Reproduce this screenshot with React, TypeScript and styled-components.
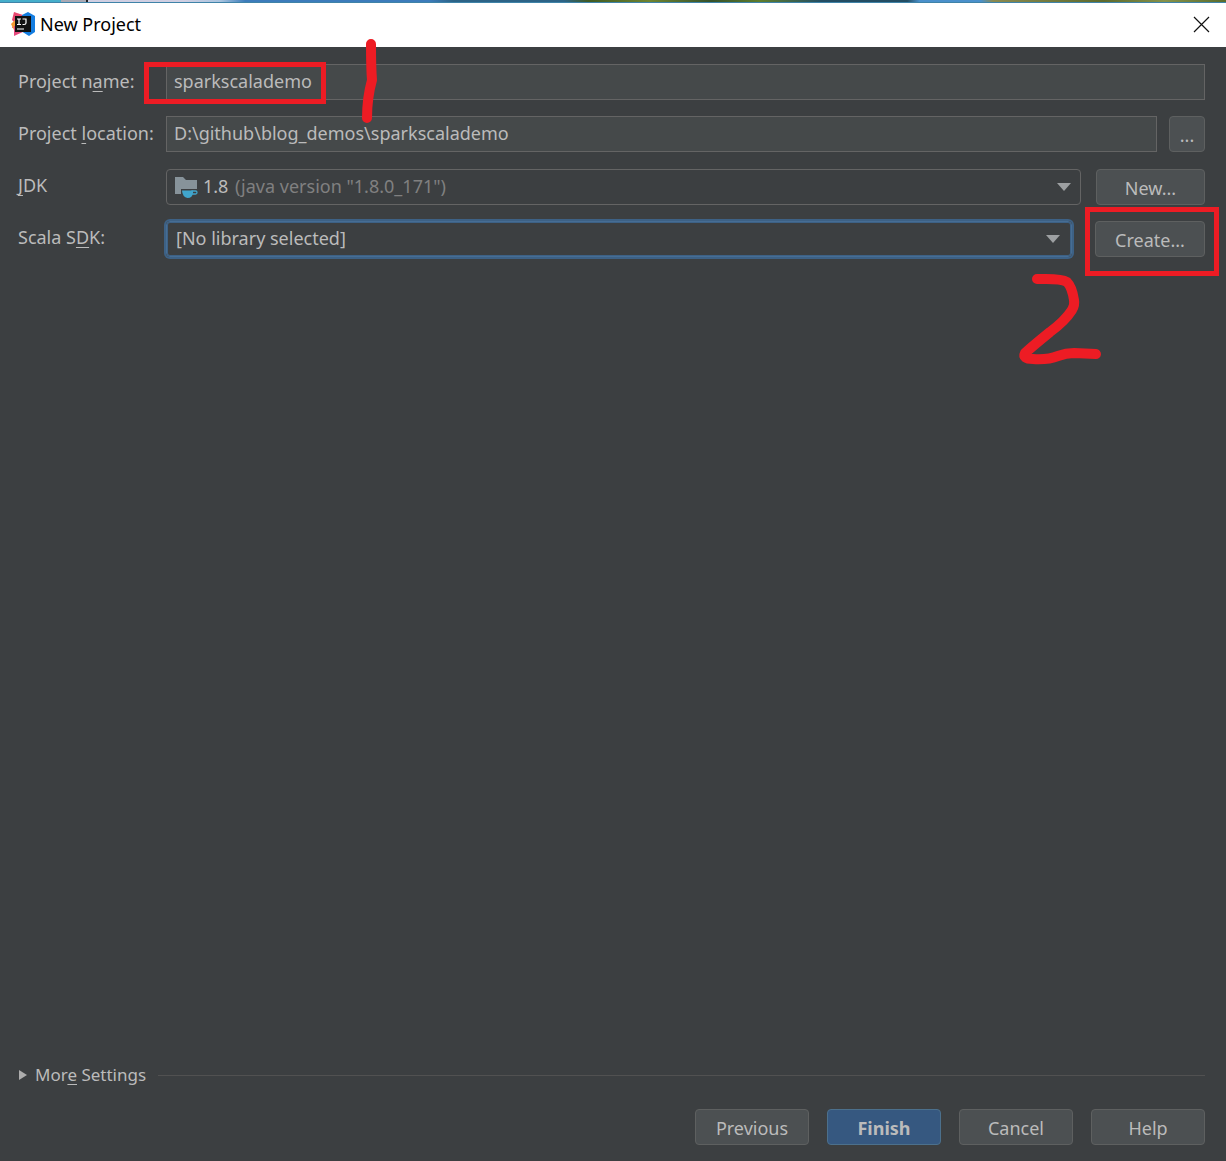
import React from "react";
import styled, { createGlobalStyle, css } from "styled-components";

const red = "#ed1c24";

const GlobalStyle = createGlobalStyle`
  * { box-sizing: border-box; }
  body {
    margin: 0;
    background: #3c3f41;
    color: #bbbbbb;
    font-family: "Noto Sans", "Noto Sans CJK SC", sans-serif;
    font-size: 18px;
    line-height: 24px;
  }
  button, input, select { font: inherit; color: inherit; margin: 0; }
`;

const Window = styled.div`
  display: flex;
  flex-direction: column;
  min-height: 100vh;
`;

const DesktopEdge = styled.div`
  height: 3px;
  border-bottom: 1px solid #3f83a8;
  background: linear-gradient(
    90deg,
    #45aecb 0 5%, #a9a9b4 5% 7%, #222 7% 7.2%, #d0cfe2 7.2% 15%, #a9c4df 18%, #3c7cbb 20% 35%,
    #2c6386 37% 46%, #3f5a22 48%, #6f8430 53%, #35512a 58%, #5f7d2c 62%, #234d63 67% 74%,
    #4a90cb 75% 80%, #8a8a50 81%, #5d6a2c 90%, #86924a 95%, #596b2c 100%
  );
`;

const TitleBar = styled.header`
  display: flex;
  align-items: center;
  gap: 5px;
  height: 44px;
  padding: 0 16px 2px 11px;
  background: #ffffff;
  color: #000000;
`;

const Title = styled.h1`
  flex: 1;
  margin: 0;
  font-size: 18px;
  font-weight: 400;
`;

const CloseButton = styled.button`
  display: flex;
  padding: 0;
  border: 0;
  background: none;
`;

const Form = styled.form`
  flex: 1;
  display: flex;
  flex-direction: column;
  padding: 17px 21px 16px 18px;
`;

const Fields = styled.div`
  display: flex;
  flex-direction: column;
  gap: 17px;
  flex: 1;
`;

const Group = styled.div`
  display: flex;
  flex-direction: column;
  gap: 16px;
`;

const Row = styled.div`
  display: flex;
  align-items: center;
  height: 36px;
`;

const Label = styled.label<{ $raised?: boolean }>`
  flex: none;
  width: 148px;
  padding-bottom: ${(p) => (p.$raised ? 4 : 2)}px;
  white-space: nowrap;
  u { text-underline-offset: 3px; }
`;

const Field = styled.div`
  position: relative;
  display: flex;
  flex: 1;
  min-width: 0;
`;

const TextInput = styled.input`
  flex: 1;
  min-width: 0;
  height: 36px;
  padding: 0 7px 2px;
  border: 1px solid #646464;
  background: #45494a;
  outline: none;
`;

const Combo = styled.div<{ $focused?: boolean }>`
  flex: 1;
  min-width: 0;
  display: flex;
  align-items: center;
  height: 36px;
  padding: 0 9px 0 8px;
  border: 1px solid #646464;
  border-radius: 4px;
  ${(p) =>
    p.$focused &&
    css`
      padding: 0 11px 0 9px;
      border-color: #466d94;
      box-shadow: 0 0 0 2px #3d6185, inset 0 0 0 1px #3d6185;
    `}
`;

const Select = styled.select<{ $grow?: boolean }>`
  appearance: none;
  flex: ${(p) => (p.$grow ? "1" : "none")};
  padding: 0 0 2px;
  border: 0;
  background: transparent;
  outline: none;
`;

const Detail = styled.span`
  flex: 1;
  margin-left: 6px;
  padding-bottom: 2px;
  color: #808080;
  white-space: nowrap;
`;

const Button = styled.button<{ $primary?: boolean; $width: number; $gap?: number }>`
  flex: none;
  width: ${(p) => p.$width}px;
  height: 36px;
  margin-left: ${(p) => p.$gap ?? 0}px;
  padding: 1px 0 0;
  border: 1px solid ${(p) => (p.$primary ? "#4c708c" : "#5e6060")};
  border-radius: 4px;
  background: ${(p) => (p.$primary ? "#365880" : "#4c5052")};
  font-weight: ${(p) => (p.$primary ? 700 : 400)};
`;

const Marked = styled.div`
  position: relative;
  display: flex;
`;

const RedBox = styled.span<{ $inset: string; $width?: number }>`
  position: absolute;
  z-index: 1;
  inset: ${(p) => p.$inset};
  width: ${(p) => (p.$width ? `${p.$width}px` : "auto")};
  border: 5px solid ${red};
  pointer-events: none;
`;

const Stroke = styled.svg<{ $left: number; $top: number }>`
  position: absolute;
  z-index: 1;
  left: ${(p) => p.$left}px;
  top: ${(p) => p.$top}px;
  fill: none;
  stroke: ${red};
  stroke-width: 10;
  stroke-linecap: round;
  stroke-linejoin: round;
  pointer-events: none;
`;

const MoreSettings = styled.div`
  display: flex;
  align-items: center;
  gap: 12px;
  margin-bottom: 22px;
  &::after {
    content: "";
    flex: 1;
    height: 1px;
    background: #515151;
  }
`;

const Disclosure = styled.button`
  display: flex;
  align-items: center;
  gap: 7px;
  padding: 0;
  border: 0;
  background: none;
  font-size: 17px;
  u { text-underline-offset: 3px; }
`;

const Actions = styled.footer`
  display: flex;
  justify-content: flex-end;
  gap: 18px;
`;

const IdeaLogo = () => (
  <svg width="24" height="24" viewBox="0 0 24 24" aria-hidden="true">
    <path d="M3 0 12 3 10 15 1 16 3 10 1 8z" fill="#e8476f" />
    <path d="M0 12 4 8 8 17 3 18z" fill="#f79a31" />
    <path d="M3 14H12L14 19 3 24z" fill="#e5497d" />
    <path d="M11 3 17 0 24 4V20L18 24 10 19z" fill="#147de0" />
    <path d="M4 4H20V20H4z" fill="#111" />
    <path
      d="M6 7H10M8 7V12.500M6 12.500H10M11.500 7H15V11Q15 12.500 13 12.500H11.500M6 17H13"
      fill="none"
      stroke="#fff"
      strokeWidth="1.200"
    />
  </svg>
);

const JdkIcon = () => (
  <svg width="28" height="24" viewBox="0 0 28 24" aria-hidden="true">
    <path d="M0 2H8L11 5H22V14H6V19H0z" fill="#87939a" />
    <path d="M7 15.500H18V18Q17.500 23 12.500 23 7.500 22 7 15.500z" fill="#40a5cc" />
    <rect x="16" y="16" width="6" height="3" rx="1.500" fill="none" stroke="#40a5cc" strokeWidth="1.300" />
  </svg>
);

const Caret = () => (
  <svg width="14" height="8" viewBox="0 0 14 8" aria-hidden="true">
    <path d="M0 0H14L7 8z" fill="#9da0a2" />
  </svg>
);

export default function App() {
  return (
    <Window>
      <GlobalStyle />
      <DesktopEdge />
      <TitleBar>
        <IdeaLogo />
        <Title>New Project</Title>
        <CloseButton type="button" aria-label="Close">
          <svg width="17" height="17" viewBox="0 0 17 17" stroke="#111" strokeWidth="1.200">
            <path d="M1 1 16 16M16 1 1 16" />
          </svg>
        </CloseButton>
      </TitleBar>
      <Form onSubmit={(e) => e.preventDefault()}>
        <Fields>
          <Group>
            <Row>
              <Label htmlFor="name">Project n<u>a</u>me:</Label>
              <Field>
                <TextInput id="name" defaultValue="sparkscalademo" />
                <RedBox $inset="-2px auto -4px -22px" $width={182} />
                <Stroke $left={194} $top={-26} width="20" height="86" viewBox="0 0 20 86" aria-hidden="true">
                  <path d="M11 6Q11 30 12 42Q7 60 7 80" />
                </Stroke>
              </Field>
            </Row>
            <Row>
              <Label htmlFor="location">Project <u>l</u>ocation:</Label>
              <Field>
                <TextInput id="location" defaultValue="D:\github\blog_demos\sparkscalademo" />
              </Field>
              <Button type="button" $width={36} $gap={12} aria-label="Browse">...</Button>
            </Row>
          </Group>
          <Group>
            <Row>
              <Label htmlFor="jdk" $raised><u>J</u>DK</Label>
              <Combo>
                <JdkIcon />
                <Select id="jdk">
                  <option>1.8</option>
                </Select>
                <Detail>(java version "1.8.0_171")</Detail>
                <Caret />
              </Combo>
              <Button type="button" $width={109} $gap={15}>New...</Button>
            </Row>
            <Row>
              <Label htmlFor="scala" $raised>Scala S<u>D</u>K:</Label>
              <Combo $focused>
                <Select id="scala" $grow>
                  <option>[No library selected]</option>
                </Select>
                <Caret />
              </Combo>
              <Marked>
                <Button type="button" $width={110} $gap={23}>Create...</Button>
                <RedBox $inset="-14px -14px -19px 13px" />
                <Stroke $left={-60} $top={46} width="96" height="104" viewBox="0 0 96 104" aria-hidden="true">
                  <path d="M25 12H34Q50 12 55 15Q60 20 62 33Q63 38 60 43Q53 54 38 65Q22 78 13 86Q10 92 21 92Q36 93 46 89Q54 86 62 86L84 87" />
                </Stroke>
              </Marked>
            </Row>
          </Group>
        </Fields>
        <MoreSettings>
          <Disclosure type="button" aria-expanded="false">
            <svg width="10" height="12" viewBox="0 0 10 12" aria-hidden="true">
              <path d="M1 1 9 6 1 11z" fill="#adadad" />
            </svg>
            <span>Mor<u>e</u> Settings</span>
          </Disclosure>
        </MoreSettings>
        <Actions>
          <Button type="button" $width={114}>Previous</Button>
          <Button type="submit" $width={114} $primary>Finish</Button>
          <Button type="button" $width={114}>Cancel</Button>
          <Button type="button" $width={114}>Help</Button>
        </Actions>
      </Form>
    </Window>
  );
}
